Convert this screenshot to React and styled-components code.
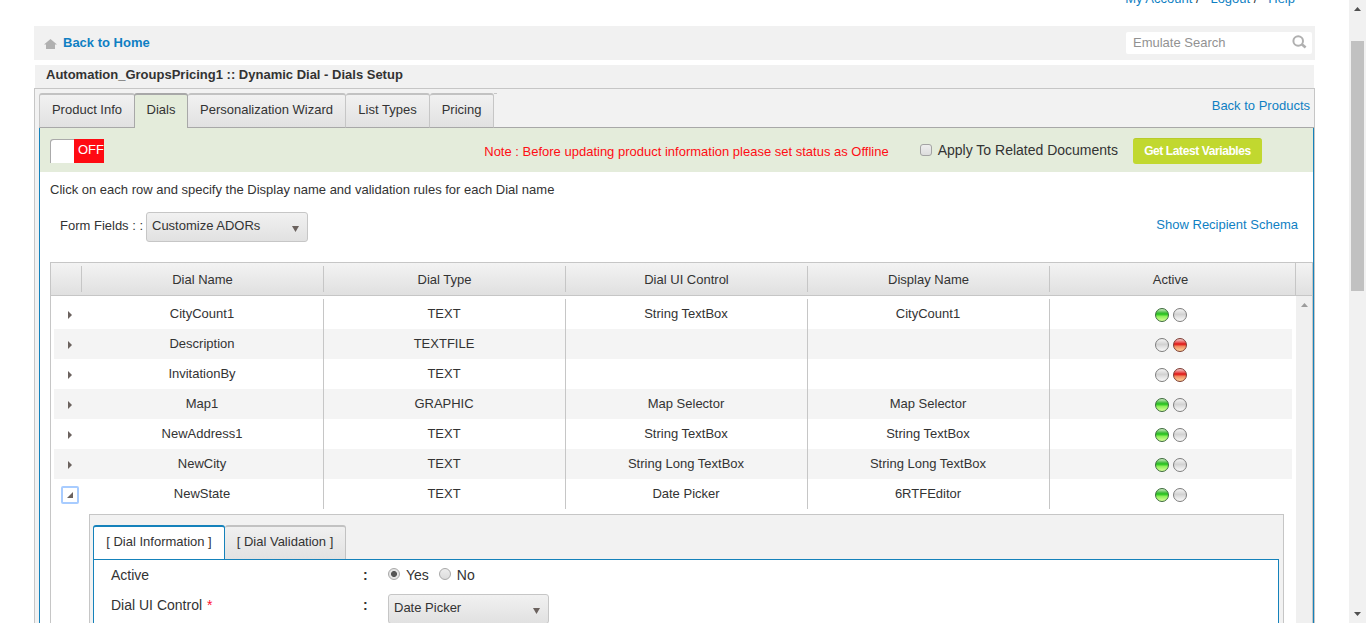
import React from "react";
import styled, { createGlobalStyle, css } from "styled-components";

const GlobalStyle = createGlobalStyle`
  * { box-sizing: border-box; }
  body {
    margin: 0;
    background: #fff;
    color: #333;
    font-family: "Liberation Sans", Arial, sans-serif;
    font-size: 13px;
    line-height: 16px;
    overflow: hidden;
  }
`;

const LINK = "#0f7fc3";
const LINE = "#c6c6c6";
const BLUE = "#1582bb";

const Page = styled.div`
  display: flex;
  width: 100%;
  height: 623px;
  overflow: hidden;
`;

const Main = styled.main`
  flex: 1;
  min-width: 0;
  padding: 0 34px;
  display: flex;
  flex-direction: column;
`;

const Link = styled.span`
  color: ${LINK};
  cursor: pointer;
`;

const AccountLinks = styled.nav`
  display: flex;
  flex: none;
  justify-content: flex-end;
  height: 26px;
  padding-right: 20px;
  line-height: 16px;
  white-space: pre;
  & > span { margin-top: -9px; }
`;

const Toolbar = styled.header`
  display: flex;
  flex: none;
  align-items: center;
  justify-content: space-between;
  height: 34px;
  padding: 0 3px 0 10px;
  background: #f1f1f1;
`;

const HomeLink = styled.div`
  display: flex;
  align-items: center;
  gap: 6px;
  font-weight: bold;
  color: ${LINK};
  svg { margin-top: 1px; }
`;

const SearchBox = styled.div`
  display: flex;
  align-items: center;
  justify-content: space-between;
  width: 186px;
  height: 22px;
  padding: 1px 5px 0 7px;
  margin-top: -1px;
  border-radius: 2px;
  background: #fff;
  color: #929292;
  svg { margin-top: -2px; }
`;

const Title = styled.h1`
  flex: none;
  height: 23px;
  margin: 5px 1px 0;
  padding: 2px 11px 0;
  background: #f1f1f1;
  font-size: 13px;
  line-height: 16px;
`;

const Panel = styled.section`
  flex: 1;
  display: flex;
  flex-direction: column;
  min-height: 0;
  padding: 4px 0 0 4px;
  border: 1px solid ${LINE};
  border-bottom: 0;
  background: #f2f2f2;
`;

const TabBar = styled.div`
  display: flex;
  flex: none;
  height: 35px;
  box-shadow: inset 0 -1px 0 #a8a8a8;
`;

const Tab = styled.div`
  flex: none;
  width: ${(p) => p.$width}px;
  padding-top: 7px;
  text-align: center;
  border: 1px solid ${LINE};
  border-top: 2px solid #c2c2c2;
  border-left-width: ${(p) => (p.$first ? 1 : 0)}px;
  border-bottom-color: #a8a8a8;
  border-radius: 3px 3px 0 0;
  background: linear-gradient(#f1f1f1, #e1e1e1);
  ${(p) =>
    p.$active &&
    css`
      border-color: #a8a8a8;
      border-left-width: 1px;
      border-bottom: 0;
      margin-left: -1px;
      background: #e4ecdb;
    `}
`;

const TabTail = styled.div`
  width: 3px;
  height: 1px;
  background: ${LINE};
`;

const TabAside = styled.div`
  margin-left: auto;
  padding: 5px 4px 0 0;
`;

const Content = styled.div`
  flex: 1;
  min-height: 0;
  display: flex;
  flex-direction: column;
  border: solid ${BLUE};
  border-width: 0 1px;
  background: #fff;
`;

const StatusBar = styled.div`
  display: flex;
  flex: none;
  align-items: center;
  height: 44px;
  padding: 0 51px 0 10px;
  background: #e4ecdb;
`;

const Toggle = styled.div`
  display: flex;
  width: 54px;
  height: 24px;
  margin-top: 2px;
  border-radius: 3px 0 0 0;
  background: #fff;
  box-shadow: inset 1px 1px 0 #aaa;
`;

const ToggleLabel = styled.span`
  width: 30px;
  margin-left: auto;
  padding: 3px 0 0 4px;
  background: #ff0a12;
  color: #fff;
  font-size: 13px;
`;

const Note = styled.span`
  margin: 4px 0 0 auto;
  color: #ff0d14;
`;

const CheckLabel = styled.label`
  display: flex;
  align-items: center;
  gap: 6px;
  margin: 0 15px 0 31px;
  font-size: 14px;
`;

const CheckBox = styled.span`
  width: 12px;
  height: 12px;
  border: 1px solid #a3a3a3;
  border-radius: 3px;
  background: linear-gradient(#eee, #ddd);
`;

const PrimaryButton = styled.button`
  width: 129px;
  height: 26px;
  margin-top: 2px;
  padding: 0 0 1px;
  border: 0;
  border-top: 1px solid #b7cb2b;
  border-radius: 3px;
  background: #c1d82f;
  color: #fff;
  font: bold 12px "Liberation Sans", Arial, sans-serif;
  letter-spacing: -0.4px;
`;

const Hint = styled.p`
  flex: none;
  margin: 10px 0 0 10px;
`;

const FilterRow = styled.div`
  display: flex;
  flex: none;
  align-items: flex-start;
  height: 30px;
  margin-top: 14px;
  padding: 0 15px 0 20px;
`;

const FilterLabel = styled.span`
  width: 86px;
  margin-top: 6px;
  white-space: nowrap;
`;

const FilterAside = styled.span`
  margin: 5px 0 0 auto;
`;

const SelectBox = styled.div`
  display: flex;
  flex: none;
  width: ${(p) => p.$width}px;
  height: 30px;
  padding: 5px 8px 0 5px;
  border: 1px solid #c6c6c6;
  border-radius: 3px;
  background: linear-gradient(#f1f1f1, #e1e1e1);
  justify-content: space-between;
  svg { margin-top: 8px; }
`;

const Grid = styled.div`
  flex: 1;
  min-height: 0;
  display: flex;
  flex-direction: column;
  margin: 20px 0 0 10px;
  border: 1px solid ${LINE};
  border-bottom: 0;
`;

const GridHead = styled.div`
  display: grid;
  flex: none;
  grid-template-columns: 31px repeat(4, 242px) 246px 1fr;
  height: 33px;
  border-bottom: 1px solid ${LINE};
  background: linear-gradient(#f3f3f3, #e0e0e0);
`;

const HeadCell = styled.div`
  margin: ${(p) => (p.$full ? 0 : "3px 0")};
  padding: ${(p) => (p.$full ? "9px 4px 0 0" : "6px 0 0")};
  text-align: center;
  border-right: 1px solid ${LINE};
`;

const GridBody = styled.div`
  display: flex;
  flex: 1;
  min-height: 0;
`;

const Rows = styled.div`
  flex: 1;
  padding: 3px 4px 0 3px;
`;

const Row = styled.div`
  display: grid;
  grid-template-columns: 28px repeat(4, 242px) 242px;
  height: 30px;
  background: ${(p) => (p.$alt ? "#f4f4f4" : "#fff")};
`;

const Cell = styled.div`
  padding: 7px 1px 0 0;
  text-align: center;
  border-right: 1px solid ${LINE};
`;

const Expander = styled.div`
  display: flex;
  align-items: center;
  justify-content: center;
  width: 18px;
  height: 18px;
  margin: 7px 0 0 7px;
  border: 2px solid ${(p) => (p.$open ? "#a8ccff" : "transparent")};
  border-radius: 2px;
`;

const Lights = styled.div`
  display: flex;
  gap: 4px;
  padding: 9px 0 0 105px;
`;

const lightFill = {
  green: "linear-gradient(#b9e6ae 5%, #4cc044 30%, #22c01c 42%, #8df05a 62%, #d8ff9b)",
  red: "linear-gradient(#f2bcbc 5%, #e65050 30%, #e01212 42%, #f08c62 62%, #ffd79c)",
  off: "linear-gradient(#ededed 10%, #d2d2d2 45%, #e2e2e2 65%, #fafafa)",
};
const lightEdge = { green: "#3c6b3c", red: "#7b3a30", off: "#7d7d7d" };

const Light = styled.span`
  width: 14px;
  height: 14px;
  border-radius: 50%;
  border: 1px solid ${(p) => lightEdge[p.$tone]};
  background: ${(p) => lightFill[p.$tone]};
`;

const GridScroll = styled.div`
  width: 16px;
  padding: 7px 0 0 5px;
  background: #f0f0f0;
  line-height: 0;
`;

const Detail = styled.div`
  height: 140px;
  margin: 5px 8px 0 35px;
  padding: 10px 4px 0 3px;
  border: 1px solid ${LINE};
  background: #f2f2f2;
`;

const DetailTabs = styled.div`
  display: flex;
  height: 35px;
  box-shadow: inset 0 -1px 0 ${BLUE};
`;

const DetailTab = styled.div`
  width: ${(p) => p.$width}px;
  height: ${(p) => (p.$active ? 35 : 34)}px;
  padding-top: 7px;
  text-align: center;
  border: 1px solid ${(p) => (p.$active ? BLUE : "#c2c2c2")};
  border-top-width: 2px;
  border-left-width: ${(p) => (p.$active ? 1 : 0)}px;
  border-bottom: ${(p) => (p.$active ? `1px solid ${BLUE}` : "0")};
  border-radius: 3px 3px 0 0;
  background: ${(p) => (p.$active ? "#fff" : "linear-gradient(#f0f0f0, #e2e2e2)")};
`;

const DetailForm = styled.div`
  height: 100px;
  padding: 0 0 0 17px;
  border: solid ${BLUE};
  border-width: 0 1px;
  background: #fff;
`;

const Field = styled.div`
  display: grid;
  grid-template-columns: 252px 25px 1fr;
  height: 30px;
  padding-top: 7px;
  font-size: 14px;
`;

const Colon = styled.b``;

const Required = styled.span`
  color: #ff1030;
  margin-left: 1px;
`;

const Radios = styled.div`
  display: flex;
  align-items: flex-start;
`;

const Radio = styled.span`
  width: 12px;
  height: 12px;
  margin: 1px 6px 0 0;
  border: 1px solid #a8a8a8;
  border-radius: 50%;
  background: ${(p) =>
    p.$on ? "radial-gradient(circle, #555 0 2.6px, #e4e4e4 3.4px)" : "linear-gradient(#ededed, #dcdcdc)"};
`;

const RadioText = styled.span`
  margin-right: 10px;
`;

const SelectSlot = styled.div`
  margin-top: -3px;
  font-size: 13px;
`;

const WindowScroll = styled.aside`
  display: flex;
  flex-direction: column;
  align-items: center;
  justify-content: space-between;
  width: 17px;
  padding: 7px 0 7px;
  background: #f1f1f1;
`;

const Thumb = styled.div`
  width: 13px;
  height: 250px;
  margin: 30px 0 auto;
  background: #c1c1c1;
`;

const Up = ({ color = "#505050" }) => (
  <svg width="7" height="4" viewBox="0 0 8 4" preserveAspectRatio="none">
    <path d="M0 4L4 0L8 4Z" fill={color} />
  </svg>
);

const Down = ({ color = "#505050", h = 4 }) => (
  <svg width="7" height={h} viewBox="0 0 8 4" preserveAspectRatio="none">
    <path d="M0 0H8L4 4Z" fill={color} />
  </svg>
);

const rows = [
  ["CityCount1", "TEXT", "String TextBox", "CityCount1", true],
  ["Description", "TEXTFILE", "", "", false],
  ["InvitationBy", "TEXT", "", "", false],
  ["Map1", "GRAPHIC", "Map Selector", "Map Selector", true],
  ["NewAddress1", "TEXT", "String TextBox", "String TextBox", true],
  ["NewCity", "TEXT", "String Long TextBox", "String Long TextBox", true],
  ["NewState", "TEXT", "Date Picker", "6RTFEditor", true],
];

const DialRow = ({ data, alt, open }) => {
  const [name, type, control, display, active] = data;
  return (
    <Row $alt={alt}>
      <Expander $open={open}>
        {open ? (
          <svg width="6" height="6" viewBox="0 0 6 6">
            <path d="M6 0V6H0Z" fill="#6b625e" />
          </svg>
        ) : (
          <svg width="4" height="8" viewBox="0 0 4 8">
            <path d="M0 0L4 4L0 8Z" fill="#6b625e" />
          </svg>
        )}
      </Expander>
      <Cell>{name}</Cell>
      <Cell>{type}</Cell>
      <Cell>{control}</Cell>
      <Cell>{display}</Cell>
      <Lights>
        <Light $tone={active ? "green" : "off"} />
        <Light $tone={active ? "off" : "red"} />
      </Lights>
    </Row>
  );
};

export default function App() {
  return (
    <Page>
      <GlobalStyle />
      <Main>
        <AccountLinks>
          <span>
            <Link>My Account</Link> /{"   "}
            <Link>Logout</Link> /{"   "}
            <Link>Help</Link>
          </span>
        </AccountLinks>
        <Toolbar>
          <HomeLink>
            <svg width="13" height="10" viewBox="0 0 13 10">
              <path d="M6.5 0L13 5.6H11V10H2V5.6H0Z" fill="#b0b0b0" />
            </svg>
            Back to Home
          </HomeLink>
          <SearchBox>
            Emulate Search
            <svg width="15" height="14" viewBox="0 0 15 14" fill="none" stroke="#b0b0b0">
              <circle cx="6.2" cy="6" r="4.8" strokeWidth="2" />
              <path d="M9.8 9.2L13.6 12.4" strokeWidth="2.6" />
            </svg>
          </SearchBox>
        </Toolbar>
        <Title>Automation_GroupsPricing1 :: Dynamic Dial - Dials Setup</Title>
        <Panel>
          <TabBar>
            <Tab $width={96} $first>Product Info</Tab>
            <Tab $width={54} $active>Dials</Tab>
            <Tab $width={158}>Personalization Wizard</Tab>
            <Tab $width={84}>List Types</Tab>
            <Tab $width={64}>Pricing</Tab>
            <TabTail />
            <TabAside>
              <Link>Back to Products</Link>
            </TabAside>
          </TabBar>
          <Content>
            <StatusBar>
              <Toggle>
                <ToggleLabel>OFF</ToggleLabel>
              </Toggle>
              <Note>Note : Before updating product information please set status as Offline</Note>
              <CheckLabel>
                <CheckBox />
                Apply To Related Documents
              </CheckLabel>
              <PrimaryButton>Get Latest Variables</PrimaryButton>
            </StatusBar>
            <Hint>Click on each row and specify the Display name and validation rules for each Dial name</Hint>
            <FilterRow>
              <FilterLabel>Form Fields : :</FilterLabel>
              <SelectBox $width={162}>
                Customize ADORs
                <Down color="#6b625e" h={6} />
              </SelectBox>
              <FilterAside>
                <Link>Show Recipient Schema</Link>
              </FilterAside>
            </FilterRow>
            <Grid>
              <GridHead>
                <HeadCell />
                <HeadCell>Dial Name</HeadCell>
                <HeadCell>Dial Type</HeadCell>
                <HeadCell>Dial UI Control</HeadCell>
                <HeadCell>Display Name</HeadCell>
                <HeadCell $full>Active</HeadCell>
              </GridHead>
              <GridBody>
                <Rows>
                  {rows.map((r, i) => (
                    <DialRow key={r[0]} data={r} alt={i % 2 === 1} open={i === 6} />
                  ))}
                  <Detail>
                    <DetailTabs>
                      <DetailTab $width={132} $active>[ Dial Information ]</DetailTab>
                      <DetailTab $width={121}>[ Dial Validation ]</DetailTab>
                    </DetailTabs>
                    <DetailForm>
                      <Field>
                        <span>Active</span>
                        <Colon>:</Colon>
                        <Radios>
                          <Radio $on />
                          <RadioText>Yes</RadioText>
                          <Radio />
                          <RadioText>No</RadioText>
                        </Radios>
                      </Field>
                      <Field>
                        <span>
                          Dial UI Control <Required>*</Required>
                        </span>
                        <Colon>:</Colon>
                        <SelectSlot>
                          <SelectBox $width={161}>
                            Date Picker
                            <Down color="#6b625e" h={6} />
                          </SelectBox>
                        </SelectSlot>
                      </Field>
                    </DetailForm>
                  </Detail>
                </Rows>
                <GridScroll>
                  <Up color="#9c9c9c" />
                </GridScroll>
              </GridBody>
            </Grid>
          </Content>
        </Panel>
      </Main>
      <WindowScroll>
        <Up />
        <Thumb />
        <Down />
      </WindowScroll>
    </Page>
  );
}
